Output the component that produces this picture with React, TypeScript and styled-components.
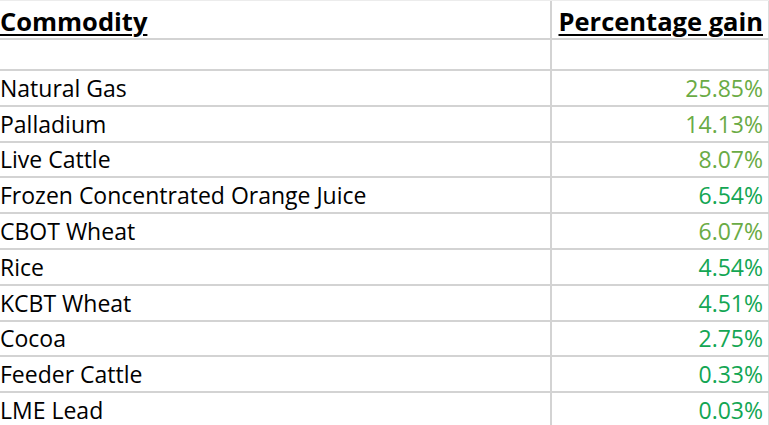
import React from "react";
import styled, { createGlobalStyle } from "styled-components";

const Global = createGlobalStyle`
  html, body { margin: 0; padding: 0; background: #ffffff; }
  body { font-family: "Open Sans", Lato, sans-serif; color: #000; }
`;

const Sheet = styled.div`
  width: 769px;
  height: 425px;
  overflow: hidden;
  border-top: 1px solid #ececec;
  box-sizing: border-box;
`;

const Row = styled.div<{ $h: number }>`
  display: grid;
  grid-template-columns: 552px 1fr;
  height: ${(p) => p.$h}px;
  border-bottom: 2px solid #d3d3d3;
`;

const Cell = styled.div<{ $right?: boolean; $color?: string }>`
  display: flex;
  align-items: flex-end;
  justify-content: ${(p) => (p.$right ? "flex-end" : "flex-start")};
  padding: ${(p) => (p.$right ? "0 5px 2px 0" : "0 0 2px 0")};
  font-size: 23px;
  line-height: 30px;
  color: ${(p) => p.$color || "#000"};
  border-right: ${(p) => (p.$right ? "1px solid #dcdcdc" : "2px solid #d3d3d3")};
  white-space: nowrap;
`;

const HeadCell = styled(Cell)`
  font-size: 25.5px;
  line-height: 32px;
  font-weight: 700;
  text-decoration: underline;
  text-decoration-thickness: 2px;
  text-underline-offset: 3px;
  padding-bottom: 1px;
`;

const OLIVE = "#6aab45";
const EMERALD = "#13a653";

const data: [string, string, string][] = [
  ["Natural Gas", "25.85%", OLIVE],
  ["Palladium", "14.13%", OLIVE],
  ["Live Cattle", "8.07%", OLIVE],
  ["Frozen Concentrated Orange Juice", "6.54%", EMERALD],
  ["CBOT Wheat", "6.07%", OLIVE],
  ["Rice", "4.54%", EMERALD],
  ["KCBT Wheat", "4.51%", EMERALD],
  ["Cocoa", "2.75%", EMERALD],
  ["Feeder Cattle", "0.33%", EMERALD],
  ["LME Lead", "0.03%", EMERALD],
];

export default function App() {
  return (
    <>
      <Global />
      <Sheet>
        <Row $h={37}>
          <HeadCell>Commodity</HeadCell>
          <HeadCell $right>Percentage gain</HeadCell>
        </Row>
        <Row $h={29}>
          <Cell />
          <Cell $right />
        </Row>
        {data.map(([name, val, color]) => (
          <Row $h={33.8} key={name}>
            <Cell>{name}</Cell>
            <Cell $right $color={color}>{val}</Cell>
          </Row>
        ))}
      </Sheet>
    </>
  );
}
